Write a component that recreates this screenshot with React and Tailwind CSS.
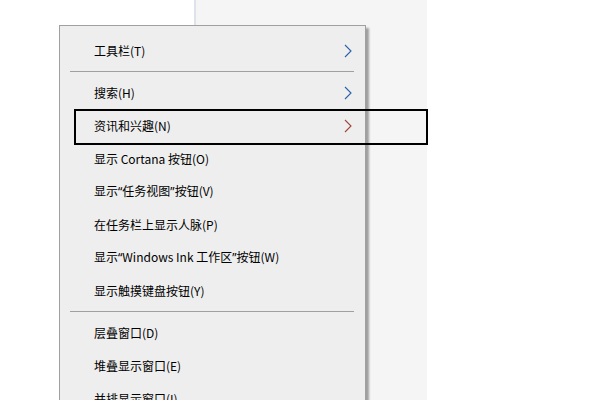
import React from "react";

const Chevron = ({ color }) => (
  <svg width="8" height="14" viewBox="0 0 8 14" className="block">
    <path d="M1 1 L7 7 L1 13" fill="none" stroke={color} strokeWidth="1.1" />
  </svg>
);

const Q = ({ children }) => (
  <span style={{ fontFamily: '"Noto Sans", sans-serif' }}>{children}</span>
);

const Item = ({ label, arrow, arrowColor }) => (
  <div className="h-[33px] flex items-center pl-[34px] pr-[13px] justify-between">
    <span className="text-[12px] text-black leading-none">{label}</span>
    {arrow && <Chevron color={arrowColor} />}
  </div>
);

const Sep = () => (
  <div className="h-[9px] flex items-center pl-[10px] pr-[11px]">
    <div className="h-px w-full bg-[#a0a0a0]" />
  </div>
);

export default function App() {
  return (
    <div
      className="relative w-[600px] h-[400px] overflow-hidden bg-white"
      style={{ fontFamily: '"Noto Sans CJK SC", "Noto Sans", sans-serif' }}
    >
      <div className="flex h-full">
        <div className="w-[194px] bg-white" />
        <div className="w-[2px] bg-[#dde3ea]" />
        <div className="w-[231px] bg-[#f5f5f5]" />
        <div className="flex-1 bg-white" />
      </div>

      <div className="absolute left-[59px] top-[25px] w-[307px] h-[400px] bg-[#eeeeee] border border-[#a0a0a0] pt-[8px] shadow-[3px_3px_2px_rgba(0,0,0,0.35)]">
        <Item label="工具栏(T)" arrow arrowColor="#2a5fa8" />
        <Sep />
        <Item label="搜索(H)" arrow arrowColor="#2a5fa8" />
        <Item label="资讯和兴趣(N)" arrow arrowColor="#a0453a" />
        <Item label="显示 Cortana 按钮(O)" />
        <Item label={<>显示<Q>“</Q>任务视图<Q>”</Q>按钮(V)</>} />
        <Item label="在任务栏上显示人脉(P)" />
        <Item label={<>显示<Q>“</Q>Windows Ink 工作区<Q>”</Q>按钮(W)</>} />
        <Item label="显示触摸键盘按钮(Y)" />
        <Sep />
        <Item label="层叠窗口(D)" />
        <Item label="堆叠显示窗口(E)" />
        <Item label="并排显示窗口(I)" />
      </div>

      <div className="absolute left-[74px] top-[109px] w-[354px] h-[36px] border-2 border-black" />
    </div>
  );
}
